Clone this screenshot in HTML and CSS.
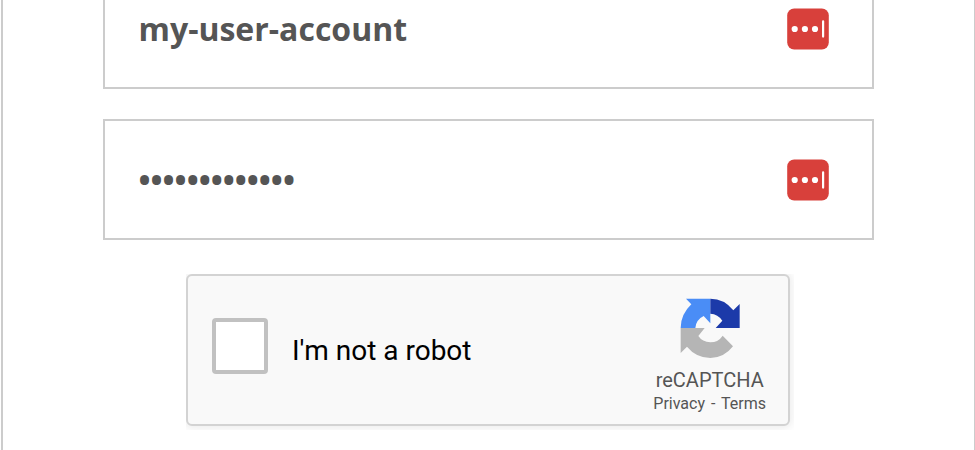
FILE: index.html
```html
<!DOCTYPE html>
<html lang="en">
<head>
  <meta charset="UTF-8">
  <meta name="viewport" content="width=device-width, initial-scale=1.0">
  <title>Sign In</title>
  <link rel="stylesheet" href="styles.css">
</head>
<body>

  <!-- Login Panel -->
  <main class="login-panel">
    <form class="login-form">
      <div class="field">
        <input type="text" name="username" value="my-user-account" aria-label="Username">
        <svg class="field-icon" viewBox="0 0 42 42">
          <rect x="0.2" y="0.5" width="41.6" height="41" rx="7" fill="#d8403b"/>
          <circle cx="7.7" cy="21" r="3.1" fill="#fff"/>
          <circle cx="17.9" cy="21" r="3.1" fill="#fff"/>
          <circle cx="28" cy="21" r="3.1" fill="#fff"/>
          <rect x="35" y="12.3" width="2.2" height="17.4" rx="1.1" fill="#fff"/>
        </svg>
      </div>

      <div class="field">
        <input type="password" name="password" value="mypassword123" aria-label="Password">
        <svg class="field-icon" viewBox="0 0 42 42">
          <rect x="0.2" y="0.5" width="41.6" height="41" rx="7" fill="#d8403b"/>
          <circle cx="7.7" cy="21" r="3.1" fill="#fff"/>
          <circle cx="17.9" cy="21" r="3.1" fill="#fff"/>
          <circle cx="28" cy="21" r="3.1" fill="#fff"/>
          <rect x="35" y="12.3" width="2.2" height="17.4" rx="1.1" fill="#fff"/>
        </svg>
      </div>

      <!-- Captcha -->
      <div class="captcha-frame">
        <div class="captcha">
          <span class="captcha-checkbox" role="checkbox" aria-checked="false"></span>
          <span class="captcha-label">I'm not a robot</span>
          <div class="captcha-brand">
            <svg class="captcha-logo" viewBox="120 39 180 180">
              <path fill="#4a8df6" d="M138 41H211V115L191 93Q168 104 166 129H122Q122 88 154 58Z"/>
              <path fill="#1c3aa9" d="M211 41Q253 41 280 76L299 57V129H227L247 107Q234 87 211 86Z"/>
              <path fill="#b5b5b5" d="M122 129H194L175 153Q187 171 211 172Q235 172 248 152L279 184Q252 219 211 219Q168 218 141 185L122 204Z"/>
            </svg>
            <div class="captcha-name">reCAPTCHA</div>
            <div class="captcha-links">Privacy - Terms</div>
          </div>
        </div>
      </div>
    </form>
  </main>

</body>
</html>
```
FILE: styles.css
```css
* {
  box-sizing: border-box;
}

html,
body {
  height: 100%;
}

body {
  margin: 0;
  background-color: #fff;
  overflow: hidden;
}

.login-panel {
  width: 975px;
  height: 450px;
  margin-left: 1px;
  border-left: 2px solid #ccc;
  border-right: 2px solid #ccc;
  overflow: hidden;
}

.login-form {
  width: 771px;
  margin: -32px 0 0 100px;
}

.field {
  display: flex;
  align-items: center;
  height: 121px;
  margin-bottom: 30px;
  padding: 0 43px 0 33.5px;
  border: 2px solid #ccc;
}

.field input {
  flex: 1;
  min-width: 0;
  height: 60px;
  padding: 0;
  border: none;
  outline: none;
  background: none;
  color: #555;
  font: bold 32px "Open Sans", sans-serif;
}

.field-icon {
  flex: none;
  width: 42px;
  height: 42px;
}

.captcha-frame {
  width: 608px;
  height: 156px;
  margin: 34px 0 0 83px;
  overflow: hidden;
}

.captcha {
  display: flex;
  align-items: center;
  width: 604px;
  height: 152px;
  padding: 0 22px 0 24px;
  border: 2px solid #d3d3d3;
  border-radius: 6px;
  background-color: #f9f9f9;
  box-shadow: 0 0 8px 2px rgba(0, 0, 0, 0.08);
  font-family: Roboto, sans-serif;
}

.captcha-checkbox {
  width: 56px;
  height: 56px;
  margin-top: -8px;
  border: 4px solid #c1c1c1;
  border-radius: 4px;
  background-color: #fff;
}

.captcha-label {
  margin-left: 24px;
  font-size: 28px;
}

.captcha-brand {
  display: flex;
  flex-direction: column;
  align-items: center;
  margin: 13px 0 0 auto;
  color: #555;
}

.captcha-logo {
  width: 60px;
  height: 60px;
}

.captcha-name {
  margin-top: 10px;
  font-size: 20px;
  line-height: 24px;
}

.captcha-links {
  font-size: 16px;
  line-height: 23px;
  word-spacing: 2px;
}
```
